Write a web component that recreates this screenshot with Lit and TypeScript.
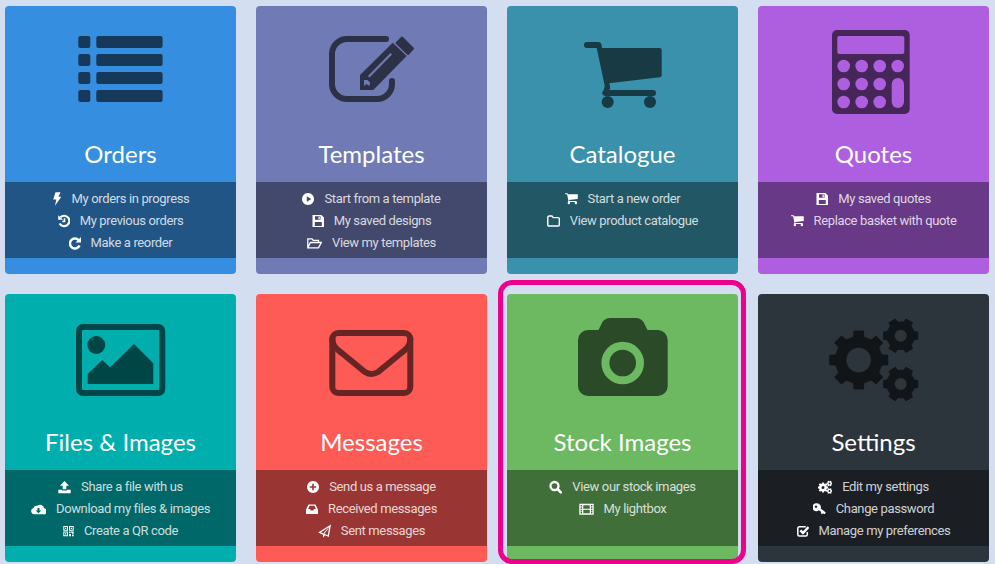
import { LitElement, html, css, svg } from "lit";
import { customElement } from "lit/decorators.js";

function gear(cx: number, cy: number, R: number, r: number, hole: number, teeth = 8, rot = 0) {
  const pts: string[] = [];
  const step = (Math.PI * 2) / teeth;
  for (let i = 0; i < teeth; i++) {
    const a = rot + i * step;
    const w = step * 0.22;
    const w2 = step * 0.3;
    const p = (rad: number, an: number) =>
      `${(cx + rad * Math.cos(an)).toFixed(2)} ${(cy + rad * Math.sin(an)).toFixed(2)}`;
    pts.push(p(r, a - w2), p(R, a - w), p(R, a + w), p(r, a + w2));
  }
  return `M${pts.join("L")}Z M${cx - hole} ${cy}a${hole} ${hole} 0 1 0 ${hole * 2} 0a${hole} ${hole} 0 1 0 ${-hole * 2} 0Z`;
}

const cartPath =
  "M12 18a3 3 0 0 1 3-2h11.500a3 3 0 0 1 3 2.500L30 22H87.700a2 2 0 0 1 2 2V49.300a2 2 0 0 1-2 2L37.300 57.300L38 60.500a3 3 0 0 1-1 3.500H81a3 3 0 0 1 0 6H33a3 3 0 0 1-1.500-5.500L32.800 60L24.700 22H15a3 3 0 0 1-3-4Z";

const big: Record<string, unknown> = {
  orders: svg`<g class="i">${[10, 28, 46, 64].map(
    (y) => svg`<rect x="8.300" y=${y} width="12" height="12" rx="2"/><rect x="26.300" y=${y} width="66.300" height="12" rx="2"/>`
  )}</g>`,
  templates: svg`<path class="s" stroke-width="6" stroke-linecap="round" d="M65 13H26a15 15 0 0 0-15 15V58a15 15 0 0 0 15 15H56a15 15 0 0 0 15-15V55"/>
    <path class="i" d="M39 49L71.700 16.700L85.700 30L52.300 64H39Z"/>
    <path class="b" d="M47 50L69.500 27L71 28.500L48.500 51.500ZM43 54H46.500L49 56.500L48.500 60L45.500 58L43 60Z"/>
    <path class="i j" d="M81 11.500L75.500 17L87 28L92 22.500Z"/>`,
  catalogue: svg`<path class="i" d=${cartPath}/><circle class="i" cx="35.700" cy="76" r="6"/><circle class="i" cx="78" cy="76" r="6"/>`,
  quotes: svg`<rect class="i" x="9" y="4" width="77.700" height="84" rx="5"/>
    <rect class="b" x="14.300" y="10" width="67" height="18" rx="2"/>
    ${[40, 58, 76].map((cy) => [20.7, 38.7, 56.7].map((cx) => svg`<circle class="b" cx=${cx} cy=${cy} r="6.300"/>`))}
    <circle class="b" cx="74.700" cy="40" r="6.300"/><rect class="b" x="68.700" y="52" width="12.300" height="30" rx="6.150"/>`,
  files: svg`<rect class="s" x="9" y="13" width="83.300" height="66" rx="4" stroke-width="6"/>
    <circle class="i" cx="26.300" cy="31" r="9"/>
    <path class="i" d="M17.700 70V60L32.300 46L40 53.300L64 30L83.300 49.300V70Z"/>`,
  messages: svg`<rect class="s" x="11.300" y="19" width="78" height="60" rx="6" stroke-width="6"/>
    <path class="s" stroke-width="6" d="M11.300 24C11.300 33 16 35 22 40L44 58Q50.300 62 57 58L79 40C85 35 89.300 33 89.300 24"/>`,
  stock: svg`<path class="i" d="M6 26a10 10 0 0 1 10-10H26.500L29 11a10 10 0 0 1 9-7H64a10 10 0 0 1 9 7L75.500 16H85.700a10 10 0 0 1 10 10V72a10 10 0 0 1-10 10H16a10 10 0 0 1-10-10Z"/>
    <circle class="b" cx="50.700" cy="49" r="21.300"/><circle class="i" cx="50.700" cy="49" r="13.300"/>`,
  settings: svg`<g class="i" fill-rule="evenodd">
    <path d=${gear(35.7, 46, 30, 24, 12.300, 8, 0)}/>
    <path d=${gear(77.7, 21.7, 18, 14.500, 6, 6, 0)}/>
    <path d=${gear(77.7, 70, 18, 14.500, 6, 6, 0)}/></g>`,
};

const small: Record<string, [number, unknown]> = {
  bolt: [10, svg`<path d="M3.500 .3H8.500L6.500 4.800H9.300L3 13.800L4.300 7.500H1.200Z"/>`],
  history: [12, svg`<path class="t" stroke-width="2.200" d="M2.500 3.200A5.200 5.200 0 1 1 1.600 9.500"/><path d="M.2 1.200L5 5.800H.2Z"/><path class="t" stroke-width="1.700" d="M6.500 4.300V7.500H4.300"/>`],
  redo: [12, svg`<path class="t" stroke-width="2.500" d="M9.700 4.200A5 5 0 1 0 10.500 9.500"/><path d="M12 1V6.500H6.500Z"/>`],
  play: [12, svg`<path fill-rule="evenodd" d="M6 1a6 6 0 1 0 .01 0ZM4.800 4.300V9.700L9.300 7Z"/>`],
  save: [12, svg`<path fill-rule="evenodd" d="M.5 1H9.500L12 3.500V13H.5ZM3 2.300V5.800H8.500V2.300ZM6.500 2.800V5.300H7.800V2.800ZM2.800 8V12H9.800V8Z"/>`],
  folderOpen: [15, svg`<path class="t" stroke-width="1.300" d="M.8 11.800V2.800H5L6.200 4.400H11.500V6.500M.8 11.800L3.500 6.500H14.300L11.500 11.800Z"/>`],
  cart: [13, svg`<g transform="translate(-2 -1.500) scale(.165)"><path d=${cartPath}/><circle cx="35.700" cy="76" r="7.500"/><circle cx="78" cy="76" r="7.500"/></g>`],
  folder: [13, svg`<path class="t" stroke-width="1.400" d="M.8 3.300A1.300 1.300 0 0 1 2.100 2H5L6.200 3.600H11.300A1 1 0 0 1 12.300 4.600V11A1 1 0 0 1 11.300 12H1.800A1 1 0 0 1 .8 11Z"/>`],
  upload: [13, svg`<path d="M6.500 1L11 5.800H8.300V9.200H4.700V5.800H2ZM.3 9.800H4V10.500H9V9.800H12.700V13.200H.3Z"/>`],
  cloud: [15, svg`<path fill-rule="evenodd" d="M3.500 12.300A3.200 3.200 0 0 1 2.600 6A3 3 0 0 1 6.300 3.800A4.200 4.200 0 0 1 13.200 6.300A3 3 0 0 1 12 12.300ZM6.500 6V8.500H4.800L7.500 11.300L10.200 8.500H8.500V6Z"/>`],
  qr: [11, svg`<path fill-rule="evenodd" d="M.3 2H5V6.700H.3ZM1.300 3V5.700H4V3ZM6 2H10.700V6.700H6ZM7 3V5.700H9.700V3ZM.3 7.500H5V12.200H.3ZM1.300 8.500V11.200H4V8.500ZM2 3.700H3.300V5H2ZM7.700 3.700H9V5H7.700ZM2 9.200H3.300V10.500H2ZM6 7.500H7.500V9.200H6ZM8 7.500H10.700V9.700H9V8.700H8ZM6 10H8V12.200H6ZM9 10.500H10.700V12.200H9Z"/>`],
  plus: [12, svg`<path fill-rule="evenodd" d="M6 1a6 6 0 1 0 .01 0ZM5.200 3.800V6.200H2.800V7.800H5.200V10.200H6.800V7.800H9.200V6.200H6.800V3.800Z"/>`],
  inbox: [12, svg`<path fill-rule="evenodd" d="M2.500 2.500H9.500L12 7.500V12H0V7.500ZM3.500 3.800L2.200 7H4L4.800 8.500H7.200L8 7H9.800L8.500 3.800Z"/>`],
  plane: [13, svg`<path fill-rule="evenodd" d="M13 .5L10.800 13L7 11.300L5 13.800V10.800L.2 8.500ZM11 3L3 8.300L5.300 9.400ZM11.200 3.600L6.300 9.800L9.700 11.200Z"/>`],
  search: [13, svg`<circle class="t" cx="5.500" cy="6" r="4" stroke-width="2.300"/><path class="t" stroke-width="2.600" stroke-linecap="round" d="M8.700 9.200L11.800 12.300"/>`],
  film: [15, svg`<path fill-rule="evenodd" d="M.3 1.800H14.700V12.700H.3ZM1.600 3V4.500H3V3ZM1.600 5.400V7H3V5.400ZM1.600 7.800V9.400H3V7.800ZM1.600 10.100V11.500H3V10.100ZM12 3V4.500H13.400V3ZM12 5.400V7H13.400V5.400ZM12 7.800V9.400H13.400V7.800ZM12 10.100V11.500H13.400V10.100ZM4.300 3.200V6.700H10.700V3.200ZM4.300 7.700V11.300H10.700V7.700Z"/>`],
  cogs: [14, svg`<g fill-rule="evenodd"><path d=${gear(5, 7.500, 5.200, 4, 1.500)}/><path d=${gear(11.500, 3.500, 3, 2.300, .9, 6)}/><path d=${gear(11.500, 11, 3, 2.300, .9, 6)}/></g>`],
  key: [13, svg`<path fill-rule="evenodd" d="M4 1.200A4 4 0 0 1 7.700 6.500L12.900 10.500L11.500 12.200L10 11.200L9 12.300L7.700 11L8.400 9.900L5.900 8.200A4 4 0 1 1 4 1.200ZM3 3.500A1.200 1.200 0 1 0 3.010 3.500Z"/>`],
  check: [12, svg`<path class="t" stroke-width="1.500" d="M10.300 8V10.500A1.500 1.500 0 0 1 8.800 12H2.300A1.500 1.500 0 0 1 .8 10.500V4.300A1.500 1.500 0 0 1 2.300 2.800H8.800"/><path class="t" stroke-width="2.500" d="M3.300 6.300L6 9L11.500 3"/>`],
};

interface Card { key: string; cls: string; title: string; links: [string, string][]; }

const cards: Card[] = [
  { key: "orders", cls: "c-orders", title: "Orders", links: [["bolt", "My orders in progress"], ["history", "My previous orders"], ["redo", "Make a reorder"]] },
  { key: "templates", cls: "c-templates", title: "Templates", links: [["play", "Start from a template"], ["save", "My saved designs"], ["folderOpen", "View my templates"]] },
  { key: "catalogue", cls: "c-catalogue", title: "Catalogue", links: [["cart", "Start a new order"], ["folder", "View product catalogue"]] },
  { key: "quotes", cls: "c-quotes", title: "Quotes", links: [["save", "My saved quotes"], ["cart", "Replace basket with quote"]] },
  { key: "files", cls: "c-files", title: "Files & Images", links: [["upload", "Share a file with us"], ["cloud", "Download my files & images"], ["qr", "Create a QR code"]] },
  { key: "messages", cls: "c-messages", title: "Messages", links: [["plus", "Send us a message"], ["inbox", "Received messages"], ["plane", "Sent messages"]] },
  { key: "stock", cls: "c-stock", title: "Stock Images", links: [["search", "View our stock images"], ["film", "My lightbox"]] },
  { key: "settings", cls: "c-settings", title: "Settings", links: [["cogs", "Edit my settings"], ["key", "Change password"], ["check", "Manage my preferences"]] },
];

@customElement("app-root")
export class AppRoot extends LitElement {
  static styles = css`
    :host { display: block; height: 564px; overflow: hidden; background: #d3def1; }
    .grid { display: grid; grid-template-columns: repeat(4, 231px); column-gap: 20px; row-gap: 20px; padding: 6px 0 0 5px; }
    .card { position: relative; height: 268px; border-radius: 4px; background: var(--bg); display: flex; flex-direction: column; align-items: stretch; }
    .c-orders { --bg: #368ee0; }
    .c-templates { --bg: #707bb5; }
    .c-catalogue { --bg: #3a91ab; }
    .c-quotes { --bg: #ae5fdf; }
    .c-files { --bg: #00aeae; }
    .c-messages { --bg: #ff5b56; }
    .c-stock { --bg: #6cb961; }
    .c-settings { --bg: #2d353c; }
    .top { height: 176px; display: flex; flex-direction: column; align-items: center; flex: none; }
    .big { width: 101px; height: 90px; margin-top: 20px; flex: none; --ic: color-mix(in srgb, var(--bg) 40%, black); }
    .big .i { fill: var(--ic); }
    .big .j { stroke: var(--ic); stroke-width: 2; stroke-linejoin: round; }
    .big .b { fill: var(--bg); }
    .big .s { fill: none; stroke: var(--ic); }
    h2 { margin: 21px 0 0; font: 400 24px/34px Lato, sans-serif; color: #fff; }
    .band { height: 76px; box-sizing: border-box; padding-top: 6px; background: rgba(0, 0, 0, 0.4); }
    .row { height: 22px; display: flex; justify-content: center; align-items: center; gap: 10px; font: 400 13px/22px Roboto, sans-serif; letter-spacing: -0.36px; color: rgba(255, 255, 255, 0.8); white-space: nowrap; }
    .row svg { height: 14px; flex: none; fill: #fff; }
    .row .t { fill: none; stroke: #fff; }
    .ring { position: absolute; left: -9px; right: -8px; top: -14px; bottom: -2px; border: 5px solid #ec008c; border-radius: 14px; pointer-events: none; }
  `;

  render() {
    return html`<div class="grid">
      ${cards.map(
        (c) => html`<div class="card ${c.cls}">
          <div class="top">
            <svg class="big" viewBox="0 0 101 90">${big[c.key]}</svg>
            <h2>${c.title}</h2>
          </div>
          <div class="band">
            ${c.links.map(([ic, text]) => {
              const [w, g] = small[ic];
              return html`<div class="row"><svg width=${w} viewBox="0 0 ${w} 14">${g}</svg><span>${text}</span></div>`;
            })}
          </div>
          ${c.key === "stock" ? html`<div class="ring"></div>` : ""}
        </div>`
      )}
    </div>`;
  }
}
